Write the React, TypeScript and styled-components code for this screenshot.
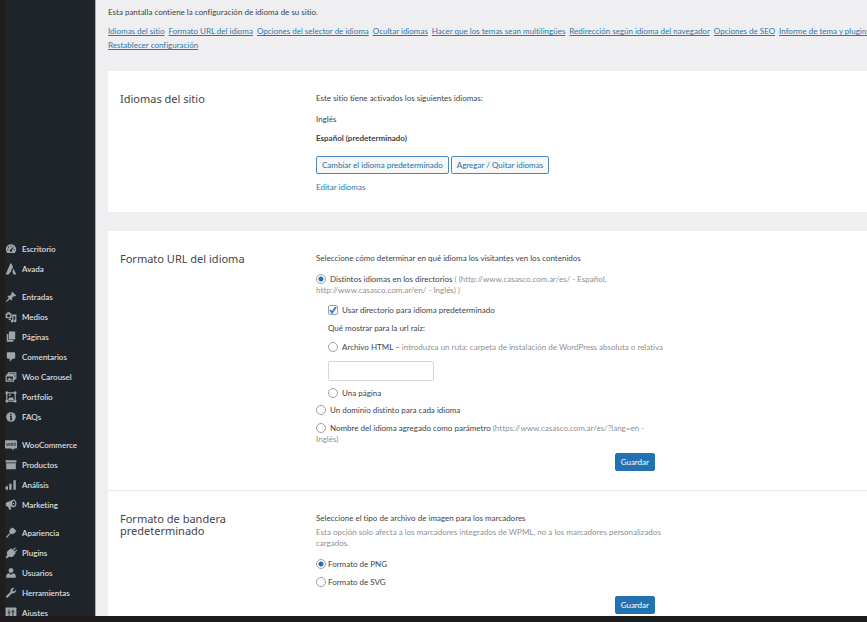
import React from 'react';
import styled, { createGlobalStyle, css } from 'styled-components';

const GlobalStyle = createGlobalStyle`
  *, *::before, *::after { box-sizing: border-box; }
  html, body { margin: 0; padding: 0; }
  body {
    background: #211c1e;
    color: #3c434a;
    font-family: Lato, "Noto Sans", sans-serif;
    font-size: 8px;
    font-variant-ligatures: none;
    line-height: 11px;
  }
  h2, p, ul, fieldset { margin: 0; padding: 0; border: 0; font: inherit; }
  ul { list-style: none; }
`;

const Screen = styled.div`
  display: flex;
  flex-direction: column;
  height: 100vh;
  overflow: hidden;
  border-bottom: 2px solid #211a1d;
`;

const Workspace = styled.div`
  display: flex;
  flex: 1;
  min-height: 0;
  border-left: 5px solid #211c1e;
`;

const BottomEdge = styled.div`
  flex: none;
  height: 4px;
  background: #1c1c1c;
`;

const Sidebar = styled.nav`
  flex: none;
  width: 90px;
  padding-top: 239px;
  overflow: hidden;
  background: #1e2429;
`;

const MenuGroup = styled.ul`
  & + & { margin-top: 8px; }
`;

const MenuLink = styled.a`
  display: flex;
  align-items: center;
  gap: 5px;
  height: 20px;
  color: #e6e7e8;
  font-weight: 500;
  text-decoration: none;
  white-space: nowrap;

  svg {
    flex: none;
    width: 12px;
    height: 12px;
    color: #a0a5aa;
    fill: currentColor;
  }
`;

const Main = styled.main`
  flex: 1;
  min-width: 0;
  overflow: hidden;
  padding: 7px 0 0 12px;
  border-left: 1px solid #a9abae;
  background: #efeff1;
`;

const Anchors = styled.nav`
  display: flex;
  flex-wrap: wrap;
  column-gap: 4px;
  margin: 6px -24px 19px 0;
  line-height: 14px;
  white-space: nowrap;
`;

const Link = styled.a<{ $plain?: boolean }>`
  color: #2d78a8;
  text-decoration: ${p => (p.$plain ? 'none' : 'underline')};
`;

const Card = styled.div`
  background: #fff;
  & + & { margin-top: 19px; }
`;

const Section = styled.section`
  display: grid;
  grid-template-columns: 196px minmax(0, 350px);
  padding: 22px 12px 19px;
  & + & { border-top: 1px solid #e9e9eb; }
`;

const Title = styled.h2`
  max-width: 140px;
  color: #3f454b;
  font-family: "Noto Sans", sans-serif;
  font-size: 11px;
  line-height: 12px;
`;

const Content = styled.div`
  display: flex;
  flex-direction: column;
`;

const Line = styled.p<{ $gap?: number; $strong?: boolean; $muted?: boolean }>`
  margin-top: ${p => p.$gap ?? 0}px;
  font-weight: ${p => (p.$strong ? 700 : 400)};
  color: ${p => (p.$muted ? '#8f8f8f' : 'inherit')};
`;

const Muted = styled.span`
  color: #8f8f8f;
`;

const Choice = styled.label<{ $gap: number; $near?: boolean }>`
  display: block;
  margin-top: ${p => p.$gap}px;
  input { margin-right: ${p => (p.$near ? 2 : 4)}px; }
`;

const Indent = styled.div`
  padding-left: 12px;
`;

const box = css`
  appearance: none;
  width: 10px;
  height: 10px;
  margin: 0;
  border: 1px solid #9da0a5;
  background: #fff no-repeat center;
  vertical-align: -2px;
`;

const Radio = styled.input.attrs({ type: 'radio' })`
  ${box}
  border-radius: 50%;
  &:checked { background-image: radial-gradient(circle, #2271b1 2px, transparent 3px); }
`;

const CheckWrap = styled.span`
  display: inline-grid;
  margin-right: 4px;
  vertical-align: -2px;
  > * { grid-area: 1 / 1; }
  svg {
    width: 10px;
    height: 10px;
    fill: none;
    stroke: #3582c4;
    stroke-width: 2;
    pointer-events: none;
  }
`;

const Checkbox = styled.input.attrs({ type: 'checkbox' })`
  ${box}
  border-radius: 2px;
  && { margin: 0; }
  &:not(:checked) + svg { visibility: hidden; }
`;

const PathInput = styled.input`
  display: block;
  width: 106px;
  height: 20px;
  margin-top: 8px;
  padding: 0 4px;
  border: 1px solid #d5d6d8;
  border-radius: 2px;
  background: #fff;
  font: inherit;
`;

const Buttons = styled.div`
  display: flex;
  gap: 2px;
  margin: 12px 0 8px;
`;

const Button = styled.button<{ $primary?: boolean }>`
  height: 18px;
  padding: 0 5px;
  border: 1px solid ${p => (p.$primary ? '#2271b1' : '#4b88ba')};
  border-radius: 2px;
  background: ${p => (p.$primary ? '#2271b1' : '#f6f7f7')};
  color: ${p => (p.$primary ? '#fff' : '#2a70a5')};
  font: inherit;
  white-space: nowrap;
  cursor: pointer;
`;

const Actions = styled.div`
  display: flex;
  justify-content: flex-end;
  margin-top: 8px;
  padding-right: 11px;
`;

const dark = '#1e2429';

const icons: Record<string, React.ReactNode> = {
  Escritorio: (
    <>
      <path d="M3.8 16.5a8.5 8.5 0 1 1 12.4 0z" />
      <g fill={dark}>
        <circle cx="10" cy="5" r="1" /><circle cx="6" cy="7" r="1" /><circle cx="4.8" cy="11" r="1" />
        <circle cx="15.2" cy="11" r="1" /><path d="M14.6 5.6l-3 7.2a1.9 1.9 0 1 1-2.6-1.6z" />
      </g>
    </>
  ),
  Avada: <path d="M9 1h2l2.5 6.5c-2 1.6-3 4-3.2 6.3L6 19H1zM13.8 9L19 19h-4.5c-2-2.5-2.6-6.5-.7-10z" />,
  Entradas: <path d="M10.44 3.02l1.82-1.82 6.36 6.35-1.83 1.82c-1.05-.68-2.48-.57-3.41.36l-.75.75c-.92.93-1.04 2.35-.35 3.41l-1.83 1.82-2.41-2.41-2.8 2.79c-.42.42-3.38 2.71-3.8 2.29s1.86-3.39 2.28-3.81l2.79-2.79L4.1 9.36l1.83-1.82c1.05.69 2.48.57 3.4-.36l.75-.75c.93-.92 1.05-2.35.36-3.41z" />,
  Medios: (
    <>
      <path fillRule="evenodd" d="M1 4h2l1-2h4l1 2h2v8H1zm5 1.500a2.500 2.500 0 1 0 0 5 2.500 2.500 0 0 0 0-5z" />
      <path d="M12 6h7v10.500a2.300 2.300 0 1 1-2-2.200V9h-3v8a2.300 2.300 0 1 1-2-2.300zM6 13h4v2H6z" />
    </>
  ),
  Páginas: <path d="M6.500 1H17v13H6.500zM3 5h2.500v10H14v3H3z" />,
  Comentarios: <path d="M5 2h10c1.100 0 2 .9 2 2v7c0 1.100-.9 2-2 2h-2.500L8 18v-5H5c-1.100 0-2-.9-2-2V4c0-1.100.9-2 2-2z" />,
  'Woo Carousel': <path fillRule="evenodd" d="M5 2h14v11h-2v2h-2v3H1V7h2V4h2zm2 2v1h9v6h1V4zM3 9v7h10V9zm1 6l3-4 2 2 1-1 2 3z" />,
  Portfolio: (
    <>
      <path fillRule="evenodd" d="M1 1h4v1h10V1h4v4h-1v10h1v4h-4v-1H5v1H1v-4h1V5H1zm3 4v10h1v1h10v-1h1V5h-1V4H5v1z" />
      <path d="M5 15l3-5 2 2 2-3 3 6z" /><circle cx="8" cy="7" r="1.500" />
    </>
  ),
  FAQs: (
    <>
      <circle cx="10" cy="10" r="8" />
      <path fill={dark} d="M8.600 4.500h2.800v2.200H8.600zM8 8h3.400v6H12v1.500H8V14h.8V9.500H8z" />
    </>
  ),
  WooCommerce: (
    <>
      <path d="M2 2h16c1 0 2 1 2 2v10c0 1-1 2-2 2h-4l1 3-5-3H2c-1 0-2-1-2-2V4c0-1 1-2 2-2z" />
      <path d="M2.500 6.500l1.500 5 2-4 1.500 4L9 6.500" fill="none" stroke={dark} strokeWidth="1.200" />
      <ellipse cx="11.800" cy="9" rx="1.400" ry="2.300" fill="none" stroke={dark} strokeWidth="1.200" />
      <ellipse cx="16.300" cy="9" rx="1.400" ry="2.300" fill="none" stroke={dark} strokeWidth="1.200" />
    </>
  ),
  Productos: <path d="M1 2h18v4H1zM2 7h16v10H2z" />,
  Análisis: <path d="M1 12h4v6H1zM7 8h4v10H7zM14 2h4v16h-4z" />,
  Marketing: (
    <>
      <path fillRule="evenodd" d="M1 8.500C1 6 3 5 5.500 4.500 9 4 12 1.500 14.500 1c3 0 4.500 4 4.500 7s-2 6-4 6-4-1.500-6-1.500l1.500 5-3 1L5 13C2.500 13 1 11 1 8.500zM14.500 3C13 3 12 5 12 7.500s1.200 4 2.500 4 2.500-1.500 2.500-4S16 3 14.500 3z" />
      <circle cx="14" cy="7.500" r="1.300" />
    </>
  ),
  Apariencia: <path d="M9 3l4-2 6 5.500-3 4-4.500 1.500-2-1-5.500 6.500c-1 1.200-2.800-.5-1.700-1.600L8 10 7 7z" />,
  Plugins: <path d="M13 4.500L16.500 1c1-.8 2 .3 1.300 1.200L14.500 6l1.500 1.500L19 4.500c1-.8 2 .3 1.200 1.200L17 9l1 1-3.500 4.500c-1.500 2.500-5 3-7.500 1.500L3 19l-2-2 3-3.500C2.500 11 3 7.500 5.500 6L10 2z" />,
  Usuarios: <path d="M10 1.500c2.300 0 4 1.700 4 4.200 0 2.300-1.700 4.300-4 4.300S6 8 6 5.700c0-2.500 1.700-4.200 4-4.200zM6.500 10.500L10 13l3.500-2.500c3 .5 4.500 2.500 4.500 5.500v2H2v-2c0-3 1.500-5 4.500-5.500z" />,
  Herramientas: <path d="M16.700 9.300c-1.300 1.300-3.300 1.700-5 1.100L4.500 17.600c-1.500 1.500-4-.9-2.400-2.400l7.200-7.100c-.6-1.800-.2-3.900 1.200-5.300C11.900 1.400 14 1 15.700 1.700l-3.200 3.200.6 2 2 .6 3.200-3.200c.7 1.700-.1 3.600-1.600 5z" />,
  Ajustes: (
    <>
      <path d="M2 1h16c.6 0 1 .4 1 1v16c0 .6-.4 1-1 1H2c-.6 0-1-.4-1-1V2c0-.6.4-1 1-1z" />
      <path fill={dark} d="M6 4h1.500v5H9v2H4.500V9H6zM6 12h1.500v4H6zM12.500 4H14v3h1.500v2H11V7h1.500zM12.500 10H14v6h-1.500z" />
    </>
  ),
};

const menu = [
  ['Escritorio', 'Avada'],
  ['Entradas', 'Medios', 'Páginas', 'Comentarios', 'Woo Carousel', 'Portfolio', 'FAQs'],
  ['WooCommerce', 'Productos', 'Análisis', 'Marketing'],
  ['Apariencia', 'Plugins', 'Usuarios', 'Herramientas', 'Ajustes'],
];

const anchors = [
  'Idiomas del sitio',
  'Formato URL del idioma',
  'Opciones del selector de idioma',
  'Ocultar idiomas',
  'Hacer que los temas sean multilingües',
  'Redirección según idioma del navegador',
  'Opciones de SEO',
  'Informe de tema y plugins',
  'Restablecer configuración',
];

export default function App() {
  return (
    <>
      <GlobalStyle />
      <Screen>
        <Workspace>
          <Sidebar aria-label="Menú principal">
            {menu.map(group => (
              <MenuGroup key={group[0]}>
                {group.map(name => (
                  <li key={name}>
                    <MenuLink href="#">
                      <svg viewBox="0 0 20 20" aria-hidden="true">{icons[name]}</svg>
                      {name}
                    </MenuLink>
                  </li>
                ))}
              </MenuGroup>
            ))}
          </Sidebar>
          <Main>
            <Line>Esta pantalla contiene la configuración de idioma de su sitio.</Line>
            <Anchors aria-label="Secciones">
              {anchors.map(text => <Link key={text} href="#">{text}</Link>)}
            </Anchors>

            <Card>
              <Section>
                <Title>Idiomas del sitio</Title>
                <Content>
                  <Line>Este sitio tiene activados los siguientes idiomas:</Line>
                  <Line $gap={10}>Inglés</Line>
                  <Line $gap={8} $strong>Español (predeterminado)</Line>
                  <Buttons>
                    <Button type="button">Cambiar el idioma predeterminado</Button>
                    <Button type="button">Agregar / Quitar idiomas</Button>
                  </Buttons>
                  <Line><Link href="#" $plain>Editar idiomas</Link></Line>
                </Content>
              </Section>
            </Card>

            <Card>
              <Section>
                <Title>Formato URL del idioma</Title>
                <Content>
                  <Line>Seleccione cómo determinar en qué idioma los visitantes ven los contenidos</Line>
                  <Choice $gap={10}>
                    <Radio name="url" defaultChecked />
                    Distintos idiomas en los directorios{' '}
                    <Muted>( (http://www.casasco.com.ar/es/ - Español, http://www.casasco.com.ar/en/ - Inglés) )</Muted>
                  </Choice>
                  <Indent>
                    <Choice $gap={9}>
                      <CheckWrap>
                        <Checkbox defaultChecked />
                        <svg viewBox="0 0 10 10" aria-hidden="true"><path d="M2 5l2 2.500L8 2" /></svg>
                      </CheckWrap>
                      Usar directorio para idioma predeterminado
                    </Choice>
                    <Line $gap={7}>Qué mostrar para la url raíz:</Line>
                    <Choice $gap={8}>
                      <Radio name="root" />
                      Archivo HTML – <Muted>introduzca un ruta: carpeta de instalación de WordPress absoluta o relativa</Muted>
                    </Choice>
                    <PathInput type="text" aria-label="Ruta del archivo HTML" />
                    <Choice $gap={7}>
                      <Radio name="root" />
                      Una página
                    </Choice>
                  </Indent>
                  <Choice $gap={6}>
                    <Radio name="url" />
                    Un dominio distinto para cada idioma
                  </Choice>
                  <Choice $gap={7}>
                    <Radio name="url" />
                    Nombre del idioma agregado como parámetro{' '}
                    <Muted>(https://www.casasco.com.ar/es/?lang=en - Inglés)</Muted>
                  </Choice>
                  <Actions><Button type="button" $primary>Guardar</Button></Actions>
                </Content>
              </Section>
              <Section>
                <Title>Formato de bandera predeterminado</Title>
                <Content>
                  <Line>Seleccione el tipo de archivo de imagen para los marcadores</Line>
                  <Line $gap={3} $muted>
                    Esta opción solo afecta a los marcadores integrados de WPML, no a los marcadores personalizados cargados.
                  </Line>
                  <Choice $gap={10} $near>
                    <Radio name="flag" defaultChecked />
                    Formato de PNG
                  </Choice>
                  <Choice $gap={7} $near>
                    <Radio name="flag" />
                    Formato de SVG
                  </Choice>
                  <Actions><Button type="button" $primary>Guardar</Button></Actions>
                </Content>
              </Section>
            </Card>
          </Main>
        </Workspace>
        <BottomEdge />
      </Screen>
    </>
  );
}
